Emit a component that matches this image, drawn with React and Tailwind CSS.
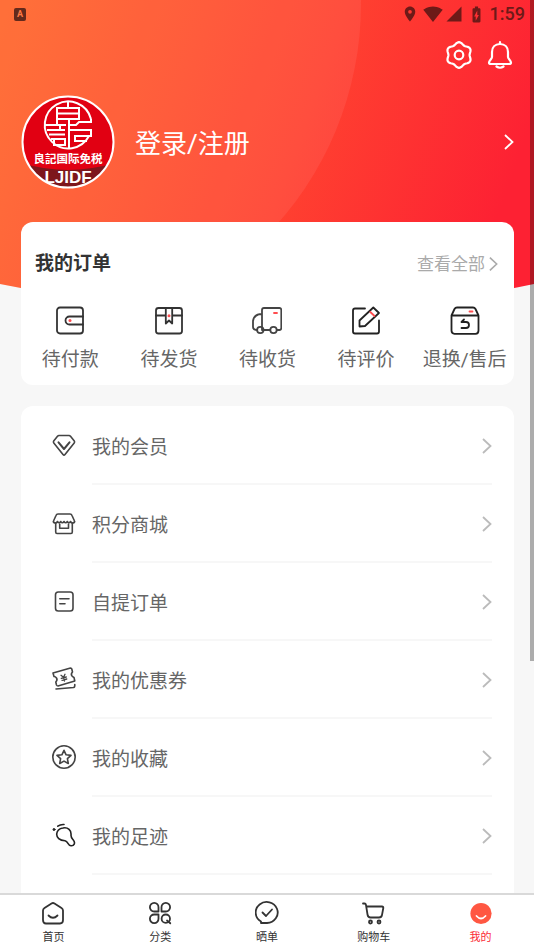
import { useState } from "react";
import {
  MdBatteryChargingFull,
  MdLocationOn,
  MdSignalCellular4Bar,
  MdSignalWifi4Bar,
} from "react-icons/md";

const orders = [
  { label: "待付款", icon: <WalletIcon /> },
  { label: "待发货", icon: <ParcelIcon /> },
  { label: "待收货", icon: <TruckIcon /> },
  { label: "待评价", icon: <ReviewIcon /> },
  { label: "退换/售后", icon: <ReturnIcon /> },
];

const menu = [
  { label: "我的会员", icon: <DiamondIcon /> },
  { label: "积分商城", icon: <ShopIcon /> },
  { label: "自提订单", icon: <NoteIcon /> },
  { label: "我的优惠券", icon: <CouponIcon /> },
  { label: "我的收藏", icon: <StarIcon /> },
  { label: "我的足迹", icon: <FootIcon /> },
];

const tabs = [
  { id: "home", label: "首页", icon: <HomeIcon /> },
  { id: "category", label: "分类", icon: <CategoryIcon /> },
  { id: "share", label: "晒单", icon: <ShareIcon /> },
  { id: "cart", label: "购物车", icon: <CartIcon /> },
  { id: "mine", label: "我的", icon: <MineIcon /> },
];

function App() {
  const [active, setActive] = useState("mine");

  return (
    <div className="relative flex h-screen flex-col bg-[#f7f7f7] font-['Roboto','Noto_Sans_CJK_SC',sans-serif]">
      <main className="flex-1 overflow-y-auto [scrollbar-width:none]">
        <Header />
        <Orders />
        <Menu />
      </main>
      <nav className="grid h-[57px] shrink-0 grid-cols-5 border-t-2 border-[#d9d9d9] bg-white">
        {tabs.map((tab) => (
          <button
            key={tab.id}
            onClick={() => setActive(tab.id)}
            className={`flex flex-col items-center pt-1.5 text-[11px] leading-4 ${
              active === tab.id ? "text-[#fb2c36]" : "text-[#333]"
            }`}
          >
            {tab.icon}
            <span className="mt-[5px]">{tab.label}</span>
          </button>
        ))}
      </nav>
      {/* scroll thumb */}
      <div className="absolute top-0 right-0 h-[661px] w-1 bg-black/30" />
    </div>
  );
}

export default App;

function Header() {
  return (
    <header className="relative h-[300px] text-white">
      <svg
        className="absolute inset-0 h-full w-full"
        viewBox="0 0 534 300"
        preserveAspectRatio="none"
      >
        <defs>
          <linearGradient
            id="sky"
            gradientUnits="userSpaceOnUse"
            x1="0"
            y1="30"
            x2="500"
            y2="210"
          >
            <stop offset="0" stopColor="#ff652b" />
            <stop offset="0.6" stopColor="#ff4130" />
            <stop offset="1" stopColor="#fd2133" />
          </linearGradient>
          <clipPath id="curve">
            <path d="M0 0H534V284Q267 340 0 284Z" />
          </clipPath>
        </defs>
        <g clipPath="url(#curve)">
          <rect width="534" height="320" fill="url(#sky)" />
          <circle cx="30" cy="4" r="331" fill="#fff" fillOpacity="0.07" />
        </g>
      </svg>

      <div className="relative">
        <div className="flex h-7 items-center justify-between pr-[9px] pl-3.5 text-[#6d1a18]">
          <span className="flex h-[13px] w-3 items-center justify-center rounded-xs bg-[#632a1c] text-[9px] leading-none font-bold text-[#ff7a45]">
            A
          </span>
          <div className="flex items-center">
            <MdLocationOn className="size-[18px]" />
            <MdSignalWifi4Bar className="ml-1 size-5" />
            <MdSignalCellular4Bar className="ml-0.5 size-[18px]" />
            <MdBatteryChargingFull className="ml-1 size-[19px]" />
            <span className="ml-1 text-lg leading-none font-medium">1:59</span>
          </div>
        </div>

        <div className="flex h-[54px] items-center justify-end gap-3 pr-5">
          <button aria-label="设置">
            <GearIcon />
          </button>
          <button aria-label="消息">
            <BellIcon />
          </button>
        </div>

        <a href="#login" className="mt-[13px] flex items-center pr-5 pl-[21px]">
          <Logo />
          <span className="ml-5 flex-1 pt-1 text-[26px]">登录/注册</span>
          <Chevron className="h-4 w-2.5" />
        </a>
      </div>
    </header>
  );
}

function Orders() {
  return (
    <section className="relative mr-5 ml-[21px] -mt-[78px] h-[163px] rounded-xl bg-white">
      <div className="flex items-center justify-between pt-7 pr-4 pl-3.5">
        <h2 className="text-[19px] leading-7 font-bold text-[#333]">
          我的订单
        </h2>
        <a
          href="#orders"
          className="flex items-center gap-1 text-[17px] leading-7 text-[#aaa]"
        >
          查看全部
          <Chevron className="h-4 w-[9px]" />
        </a>
      </div>
      <div className="mt-7 grid grid-cols-5">
        {orders.map((item) => (
          <button
            key={item.label}
            className="flex flex-col items-center text-[19px] leading-7 whitespace-nowrap text-[#666]"
          >
            {item.icon}
            <span className="mt-2.5">{item.label}</span>
          </button>
        ))}
      </div>
    </section>
  );
}

function Menu() {
  return (
    <section className="mt-[21px] mr-5 ml-[21px] h-[600px] rounded-xl bg-white">
      {menu.map((item) => (
        <a
          key={item.label}
          href="#menu"
          className="flex h-[78px] items-center gap-4 pr-[22px] pl-[31px] text-[19px] text-[#666]"
        >
          {item.icon}
          <span className="flex h-[79px] flex-1 items-center justify-between border-b-2 border-[#f7f7f7] pt-1">
            <span className="pt-1">{item.label}</span>
            <Chevron className="h-4 w-2.5 text-[#bbb]" />
          </span>
        </a>
      ))}
    </section>
  );
}

function Chevron({ className }) {
  return (
    <svg
      viewBox="0 0 10 16"
      className={className}
      fill="none"
      stroke="currentColor"
      strokeWidth="1.8"
    >
      <path d="M1 1l7.500 7L1 15" />
    </svg>
  );
}

function Logo() {
  return (
    <svg viewBox="0 0 94 94" className="size-[94px]">
      <defs>
        <clipPath id="badge">
          <circle cx="47" cy="47" r="45.500" />
        </clipPath>
      </defs>
      <g clipPath="url(#badge)">
        <rect width="94" height="94" fill="#e10012" />
        <path d="M0 68Q47 82 94 68V94H0Z" fill="#7d161c" />
        <text
          x="47"
          y="88"
          textAnchor="middle"
          fontSize="17"
          fontWeight="700"
          fill="#fff"
          className="font-['Liberation_Sans',sans-serif]"
        >
          LJIDF
        </text>
      </g>
      <g fill="none" stroke="#fff" strokeWidth="2">
        <path d="M70 24A23.500 23.500 0 1 0 68 41" />
        <path d="M47 7V13M36 30V13H58V24H36M36 18.500H58" />
        <path d="M24 30H45M48 24V54M48 30H55L58 27H70V24" />
        <path d="M48 35H70V41H54V46H66" />
        <path d="M26 35H44M28 39.500H44M30 44H44V50H33V44M39 30V35" />
      </g>
      <text
        x="47"
        y="68"
        textAnchor="middle"
        fontSize="11.500"
        fontWeight="700"
        fill="#fff"
      >
        良記国际免税
      </text>
      <circle
        cx="47"
        cy="47"
        r="45.500"
        fill="none"
        stroke="#fff"
        strokeWidth="2"
      />
    </svg>
  );
}

// outline of the gear: a circle with six soft lobes
const gearPoints = Array.from({ length: 72 }, (_, i) => {
  const a = (i * Math.PI) / 36;
  const r = 11.7 + 1.1 * Math.cos(6 * a);
  return `${(15 + r * Math.sin(a)).toFixed(2)},${(15 - r * Math.cos(a)).toFixed(2)}`;
}).join(" ");

function GearIcon() {
  return (
    <svg
      viewBox="0 0 30 30"
      className="size-[30px]"
      fill="none"
      stroke="currentColor"
      strokeWidth="2.200"
    >
      <polygon points={gearPoints} strokeLinejoin="round" />
      <circle cx="15" cy="15" r="4.300" />
    </svg>
  );
}

function BellIcon() {
  return (
    <svg
      viewBox="0 0 28 30"
      className="h-[30px] w-7"
      fill="none"
      stroke="currentColor"
      strokeWidth="2.200"
      strokeLinecap="round"
      strokeLinejoin="round"
    >
      <path d="M14 2V4M14 4C9 4 6 7.500 6 12V17C6 19 3 20.500 3 22.500Q3 24 5 24H23Q25 24 25 22.500C25 20.500 22 19 22 17V12C22 7.500 19 4 14 4Z" />
      <path d="M10.500 26.500Q14 29 17.500 26.500" />
    </svg>
  );
}

function OrderSvg({ children, color = "#333" }) {
  return (
    <svg
      viewBox="0 0 30 30"
      className="size-[30px]"
      fill="none"
      stroke={color}
      strokeWidth="1.800"
      strokeLinejoin="round"
      strokeLinecap="round"
    >
      {children}
    </svg>
  );
}

function WalletIcon() {
  return (
    <OrderSvg>
      <rect x="2" y="1.500" width="26" height="26" rx="3" />
      <path d="M28 10.500H14.500a4 4 0 0 0 0 8H28" />
      <circle cx="15" cy="14.500" r="1.500" fill="#ff4d4f" stroke="none" />
    </OrderSvg>
  );
}

function ParcelIcon() {
  return (
    <OrderSvg>
      <rect x="2" y="2" width="26" height="25.500" rx="2.500" />
      <path d="M2 9.500H11.500M18.500 9.500H28M11.800 2V17.500L15 14.500L18.200 17.500V2" />
      <circle cx="15" cy="9.800" r="1.500" fill="#ff4d4f" stroke="none" />
    </OrderSvg>
  );
}

function TruckIcon() {
  return (
    <OrderSvg color="#444">
      <path d="M5 24Q1 24 1 21V15Q2 8 10 8M11.500 24H10V4Q10 2 12 2H27.500Q29.300 2 29.300 4V22Q29.300 24 27.500 24H25M11.500 24H18" />
      <circle cx="8.300" cy="24" r="3.200" />
      <circle cx="21.500" cy="24" r="3.200" />
      <path d="M22 7H25" stroke="#ff4d4f" />
    </OrderSvg>
  );
}

function ReviewIcon() {
  return (
    <OrderSvg color="#222">
      <path d="M14 2.500H4Q2 2.500 2 4.500V25.500Q2 27.500 4 27.500H26Q28 27.500 28 25.500V14.500" />
      <path d="M8.500 20.500V14.500L22.300 1.500L28 7L14 20Z" />
      <path d="M19.300 6L23.500 10" stroke="#ff4d4f" />
    </OrderSvg>
  );
}

function ReturnIcon() {
  return (
    <OrderSvg color="#222">
      <path d="M1.500 9.500L4.500 3Q5.300 1.500 7 1.500H23Q24.700 1.500 25.500 3L28.500 9.500V24.500Q28.500 27.800 25.500 27.800H4.500Q1.500 27.800 1.500 24.500ZM1.500 9.500H28.500" />
      <path d="M14 13.500L11.500 16H16Q19 16 19 19T16 22H11.500" />
      <path d="M19.500 5.500H22.500" stroke="#ff4d4f" />
    </OrderSvg>
  );
}

function MenuSvg({ children }) {
  return (
    <svg
      viewBox="0 0 24 24"
      className="size-6 shrink-0"
      fill="none"
      stroke="#444"
      strokeWidth="1.600"
      strokeLinejoin="round"
      strokeLinecap="round"
    >
      {children}
    </svg>
  );
}

function DiamondIcon() {
  return (
    <MenuSvg>
      <path d="M7 2.500H17Q18 2.500 18.500 3.300L22.300 8Q23 9 22.200 10L13 21.500Q12 22.700 11 21.500L1.800 10Q1 9 1.700 8L5.500 3.300Q6 2.500 7 2.500Z" />
      <path d="M6.500 9.300L12 16L17.500 9.300" strokeWidth="2" />
    </MenuSvg>
  );
}

function ShopIcon() {
  return (
    <MenuSvg>
      <path d="M2 11.500Q1 11 1.500 10L4 4.500Q4.500 3 6 3H18Q19.500 3 20 4.500L22.500 10Q23 11 22 11.500" />
      <path d="M2 11.500Q4 13 5.500 10.500Q7 13 8.700 10.500Q10.300 13 12 10.500Q13.700 13 15.300 10.500Q17 13 18.500 10.500Q20 13 22 11.500" />
      <path d="M3.700 12V21Q3.700 22.500 5 22.500H19Q20.300 22.500 20.300 21V12M7.700 13V17.200H16.500V13" />
    </MenuSvg>
  );
}

function NoteIcon() {
  return (
    <MenuSvg>
      <rect x="3.500" y="3" width="17.500" height="19" rx="2.800" />
      <path d="M7.800 9.800H17M7.800 14.800H13" />
    </MenuSvg>
  );
}

function CouponIcon() {
  return (
    <MenuSvg>
      <path d="M1 6L18.500 1Q19.500 1 19.800 2L20.500 5Q18.500 7 20 9Q21 10 22 10.500L22.800 14L6 19Q5 19 4.500 18L3.800 15Q5.800 13 4.500 11Q3.500 9.500 2 9.500Z" />
      <path d="M4 22L21.500 20.500Q23 20.300 22.800 17.500" />
      <path
        d="M9 8.300L11.500 10.300L13 7.300M11.500 10.300L12.500 14M9.300 11.300L14.300 10M10 13.300L14.800 12"
        strokeWidth="1.300"
      />
    </MenuSvg>
  );
}

function StarIcon() {
  return (
    <MenuSvg>
      <circle cx="12" cy="12" r="11.200" />
      <path d="M12 5.300L14.100 9.800L19 10.400L15.400 13.700L16.300 18.500L12 16.100L7.700 18.500L8.600 13.700L5 10.400L9.900 9.800Z" />
    </MenuSvg>
  );
}

function FootIcon() {
  return (
    <MenuSvg>
      <g stroke="#222">
        <path d="M11 5C16 4 19.500 7.500 19 12C18.800 14.500 20 15.500 21.300 17C23.800 20 22 23 19 22.700C15.500 22.500 16.500 18.500 13 17.700C7.500 17.500 4.500 14.500 4.700 11C5 7.500 7.500 5.500 11 5Z" />
        <path d="M5.800 3.200Q8.500 1.200 12 1.500" />
        <circle cx="2" cy="6.500" r="1" fill="#222" strokeWidth="1" />
      </g>
    </MenuSvg>
  );
}

function TabSvg({ children }) {
  return (
    <svg
      viewBox="0 0 24 24"
      className="size-6"
      fill="none"
      stroke="#333"
      strokeWidth="1.800"
      strokeLinejoin="round"
      strokeLinecap="round"
    >
      {children}
    </svg>
  );
}

function HomeIcon() {
  return (
    <TabSvg>
      <path d="M10.500 2.500Q12 1.500 13.500 2.500L20.500 7Q22 8 22 9.500V19Q22 22.500 19 22.500H5Q2 22.500 2 19V9.500Q2 8 3.500 7Z" />
      <path d="M7.500 14.500Q12 19 16.500 14.500" />
    </TabSvg>
  );
}

function CategoryIcon() {
  return (
    <TabSvg>
      <path d="M10.500 10.500H6.300A4.300 4.300 0 1 1 10.500 6.300Z" />
      <path d="M13.500 10.500H17.700A4.300 4.300 0 1 0 13.500 6.300Z" />
      <path d="M10.500 13.500H6.300A4.300 4.300 0 1 0 10.500 17.700Z" />
      <circle cx="17.800" cy="17.700" r="4.200" />
      <path d="M19 19.500L22.300 22.300" />
    </TabSvg>
  );
}

function ShareIcon() {
  return (
    <TabSvg>
      <path d="M6 20.500A11 10.500 0 1 1 12 22H6Z" />
      <path d="M7.500 11.500L11 15L17 8.500" />
    </TabSvg>
  );
}

function CartIcon() {
  return (
    <TabSvg>
      <path d="M1 2.500H2.500Q3.700 2.500 4 4L5.500 13.500Q6 16.500 8.500 16.500H17Q19.500 16.500 20 14L21.300 7Q21.500 5.500 20 5.500H4.300" />
      <circle cx="8.500" cy="21" r="1.500" />
      <circle cx="17" cy="21" r="1.500" />
    </TabSvg>
  );
}

function MineIcon() {
  return (
    <TabSvg>
      <circle cx="12" cy="12.500" r="10.600" fill="#ff5742" stroke="none" />
      <path d="M7.500 15Q12 20 16.500 15" stroke="#fff" />
    </TabSvg>
  );
}
